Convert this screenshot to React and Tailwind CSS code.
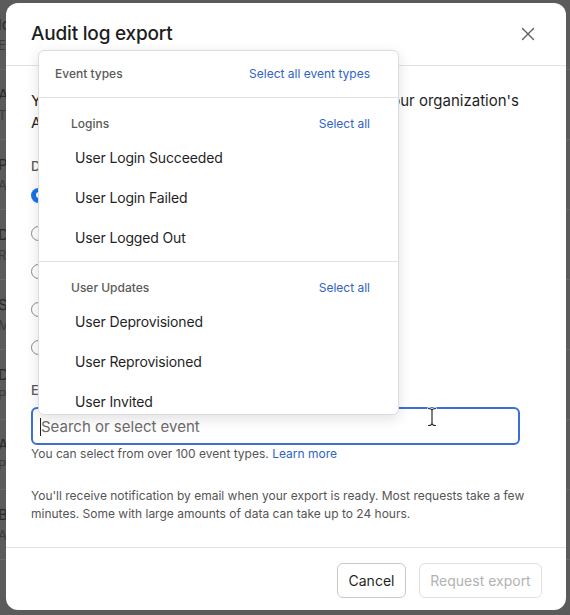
import React from 'react';

const bgRows = [
  ['log API', 'Export audit logs programmatically'],
  ['Admin log', 'Track admin activity'],
  ['Policies', 'Audit log activity'],
  ['Delete user', 'Remove access for users'],
  ['Site access', 'Manage user settings'],
  ['Default', 'Product access and roles'],
  ['Authentication', 'Policies for your users'],
  ['Browse', 'Activity'],
];

const sections = [
  {
    name: 'Logins',
    items: ['User Login Succeeded', 'User Login Failed', 'User Logged Out'],
  },
  {
    name: 'User Updates',
    items: ['User Deprovisioned', 'User Reprovisioned', 'User Invited', 'User Removed'],
  },
];

const radios = ['Last 7 days', 'Last 30 days', 'Last 90 days', 'Last 180 days', 'Custom range'];

const CloseIcon = () => (
  <svg width="16" height="16" viewBox="0 0 16 16" fill="none" stroke="#5e5e5e" strokeWidth="1.4" strokeLinecap="round">
    <path d="M2.5 2.5l11 11M13.5 2.5l-11 11" />
  </svg>
);

// mouse pointer (I-beam) sitting over the input
const IBeam = () => (
  <svg width="10" height="20" viewBox="0 0 10 20" fill="none">
    <path d="M1.5 1.5c2 0 3.5 0.8 3.5 2.5v12c0 1.7-1.5 2.5-3.5 2.5M8.5 1.5c-2 0-3.5 0.8-3.5 2.5v12c0 1.7 1.5 2.5 3.5 2.5" stroke="#ffffff" strokeWidth="2.6" strokeLinecap="round" />
    <path d="M1.5 1.5c2 0 3.5 0.8 3.5 2.5v12c0 1.7-1.5 2.5-3.5 2.5M8.5 1.5c-2 0-3.5 0.8-3.5 2.5v12c0 1.7 1.5 2.5 3.5 2.5" stroke="#2b2b2b" strokeWidth="1.2" strokeLinecap="round" />
  </svg>
);

const EventDropdown = () => (
  <div className="absolute left-[32px] top-[47px] w-[361px] h-[365px] overflow-hidden rounded-[6px] border border-[#dcdcdc] bg-white shadow-[0_4px_14px_rgba(0,0,0,0.12)]">
    <div className="flex h-[47px] items-center justify-between border-b border-[#e2e2e2] pl-[16px] pr-[28px] text-[12px]">
      <span className="font-medium text-[#5a5a5a]">Event types</span>
      <span className="text-[#2f63c6]">Select all event types</span>
    </div>
    {sections.map((s, i) => (
      <div key={s.name} className={i === 0 ? 'border-b border-[#e2e2e2] pb-[4px]' : ''}>
        <div className="flex h-[18px] items-center justify-between mt-[17px] pl-[32px] pr-[28px] text-[12px] leading-[18px]">
          <span className="font-medium text-[#5a5a5a]">{s.name}</span>
          <span className="text-[#2f63c6]">Select all</span>
        </div>
        <div className="mt-[4px]">
          {s.items.map((item) => (
            <div key={item} className="flex h-[40px] items-center pl-[36px] text-[14px] tracking-[-0.15px] text-[#1f1f1f]">
              {item}
            </div>
          ))}
        </div>
      </div>
    ))}
  </div>
);

export default function App() {
  return (
    <div
      className="relative h-[615px] w-[570px] overflow-hidden bg-[#5b5b5b]"
      style={{ fontFamily: 'Inter, "Noto Sans", sans-serif' }}
    >
      {/* dimmed page behind the dialog */}
      <div className="flex flex-col -ml-[40px] text-[#2a2a2a]">
        {bgRows.map(([a, b]) => (
          <div key={a} className="flex h-[70px] flex-col justify-center border-b border-[#676767] pl-[38px] text-[15px] leading-[20px]">
            <span>{a}</span>
            <span className="text-[13px] text-[#3a3a3a]">{b}</span>
          </div>
        ))}
      </div>

      <div className="absolute left-[6px] top-[3px] flex h-[607px] w-[560px] flex-col rounded-[12px] bg-white">
        {/* header */}
        <div className="flex h-[63px] shrink-0 items-center justify-between border-b border-[#e3e3e3] pl-[25px] pr-[30px]">
          <h2 className="text-[19px] font-medium text-[#1d1d1d] tracking-[-0.2px]">Audit log export</h2>
          <CloseIcon />
        </div>

        {/* body */}
        <div className="flex-1 px-[25px] pt-[24px]">
          <div className="text-[15px] leading-[22px] text-[#1f1f1f]">
            <div className="flex justify-between whitespace-nowrap pr-[22px]">
              <span>You can export up to 180 days of audit log data</span>
              <span>your organization's</span>
            </div>
            <div>Atlassian products and admin activity.</div>
          </div>

          <div className="mt-[23px] text-[13px] font-medium leading-[18px] text-[#5a5a5a]">Date range</div>
          <div className="mt-[1px] flex flex-col">
            {radios.map((r, i) => (
              <label key={r} className="flex h-[38px] items-center gap-[8px] text-[15px] text-[#1f1f1f]">
                {i === 0 ? (
                  <span className="flex h-[15px] w-[15px] items-center justify-center rounded-full bg-[#1a73e8]">
                    <span className="h-[6px] w-[6px] rounded-full bg-white" />
                  </span>
                ) : (
                  <span className="h-[15px] w-[15px] rounded-full border border-[#8a8a8a] bg-white" />
                )}
                {r}
              </label>
            ))}
          </div>

          <div className="mt-[15px] text-[13px] font-medium leading-[18px] text-[#5a5a5a]">Event types</div>
          <div className="relative mt-[8px] flex h-[38px] w-[489px] items-center rounded-[6px] border-2 border-[#3a6fd6] pl-[7px] pt-[2px]">
            <span className="h-[18px] w-[1px] bg-[#1f1f1f]" />
            <span className="text-[15px] text-[#6b6b6b]">Search or select event</span>
            <span className="absolute left-[394px] top-[-2px]">
              <IBeam />
            </span>
          </div>
          <div className="mt-[1px] text-[12px] leading-[15px] text-[#555555]">
            You can select from over 100 event types. <span className="text-[#2f63c6]">Learn more</span>
          </div>

          <div className="mt-[26px] whitespace-nowrap text-[12px] leading-[18px] text-[#555555]">
            You'll receive notification by email when your export is ready. Most requests take a few
            <br />
            minutes. Some with large amounts of data can take up to 24 hours.
          </div>
        </div>

        {/* footer */}
        <div className="flex h-[63px] shrink-0 items-start justify-end gap-[13px] border-t border-[#e3e3e3] pr-[24px] pt-[15px]">
          <button className="h-[35px] w-[69px] rounded-[6px] border border-[#c9c9c9] bg-white text-[14px] text-[#1f1f1f]">
            Cancel
          </button>
          <button className="h-[35px] w-[123px] rounded-[6px] border border-[#e1e1e1] bg-white text-[14px] text-[#b2b2b2]">
            Request export
          </button>
        </div>

        <EventDropdown />
      </div>
    </div>
  );
}
